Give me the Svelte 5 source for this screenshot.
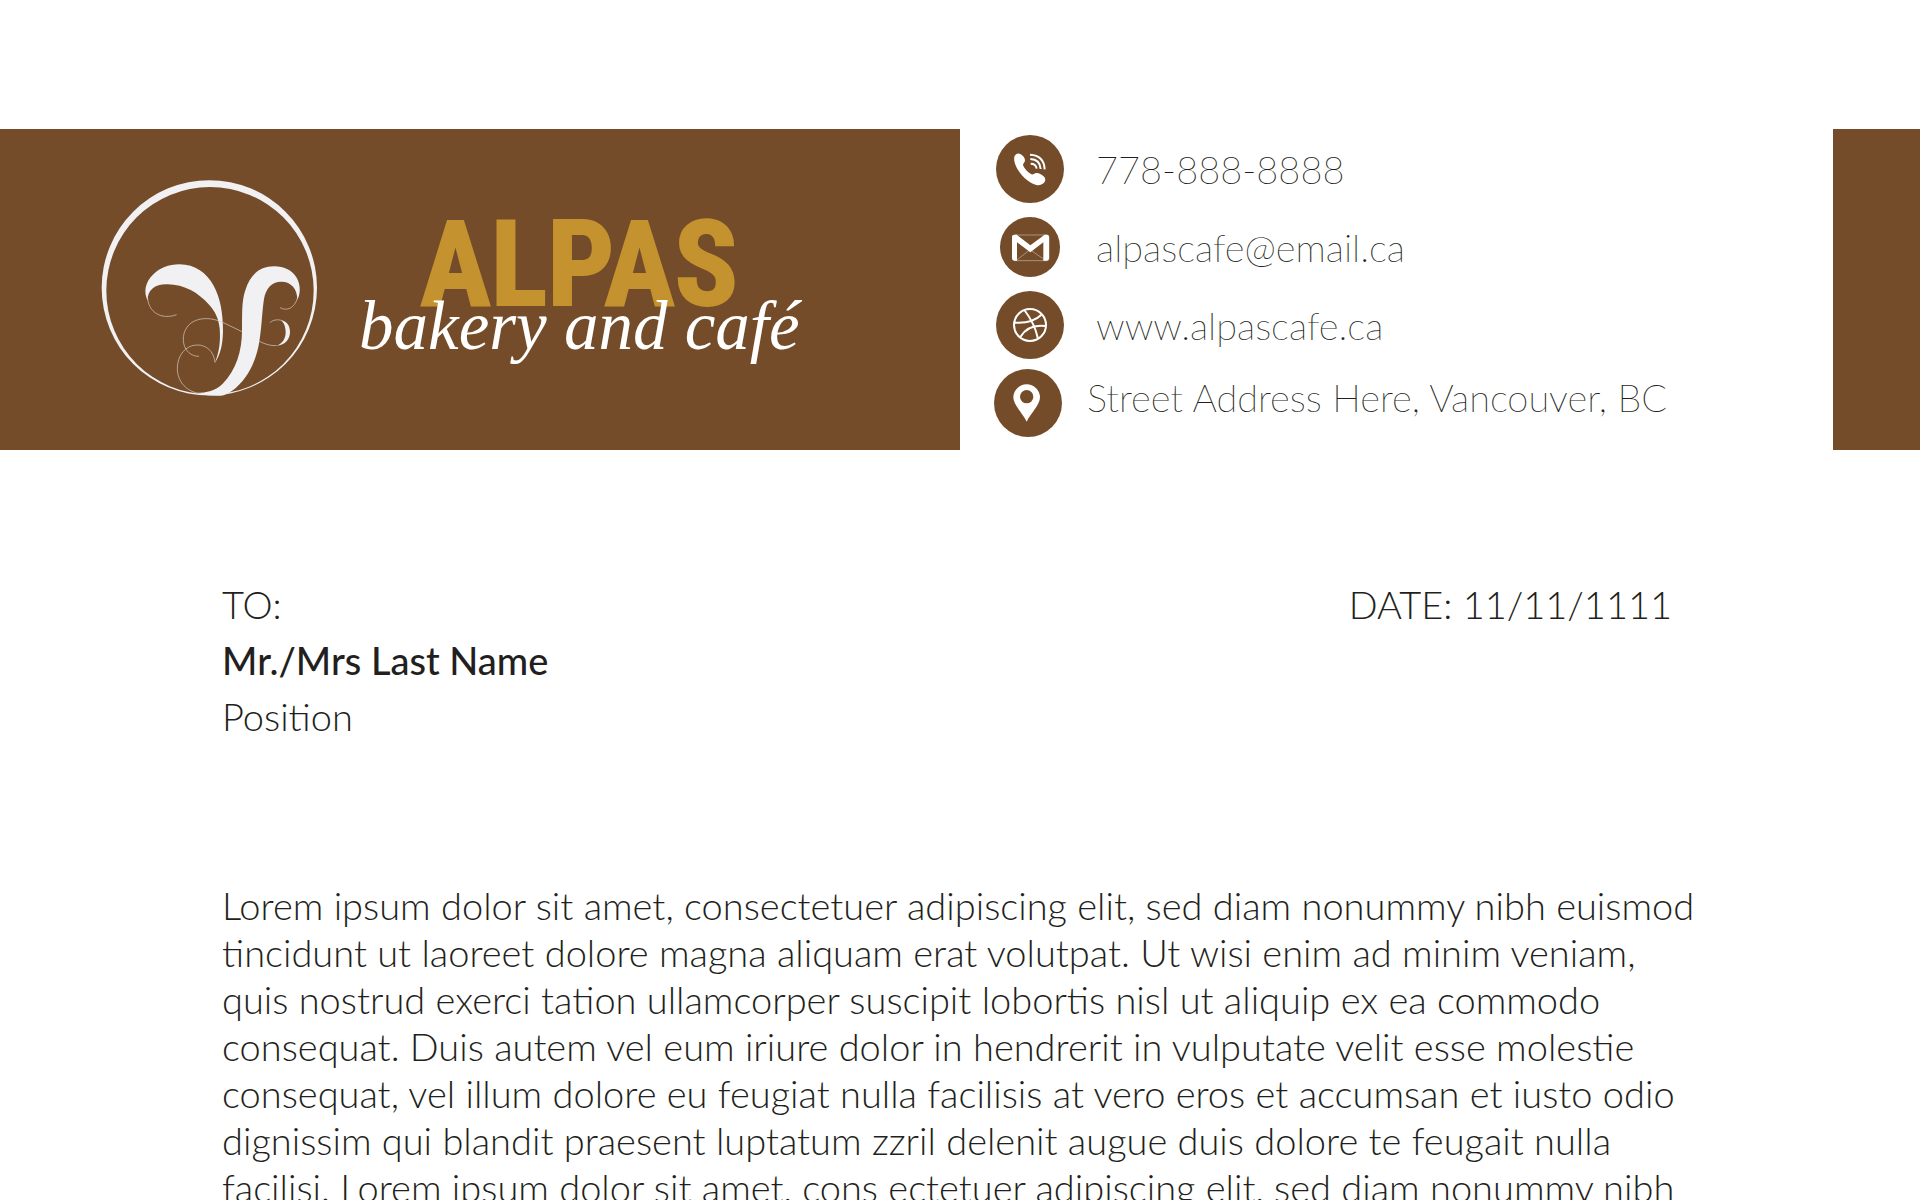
<script>
  const body =
    'Lorem ipsum dolor sit amet, consectetuer adipiscing elit, sed diam nonummy nibh euismod tincidunt ut laoreet dolore magna aliquam erat volutpat. Ut wisi enim ad minim veniam, quis nostrud exerci tation ullamcorper suscipit lobortis nisl ut aliquip ex ea commodo consequat. Duis autem vel eum iriure dolor in hendrerit in vulputate velit esse molestie consequat, vel illum dolore eu feugiat nulla facilisis at vero eros et accumsan et iusto odio dignissim qui blandit praesent luptatum zzril delenit augue duis dolore te feugait nulla facilisi. Lorem ipsum dolor sit amet, cons ectetuer adipiscing elit, sed diam nonummy nibh';
</script>

<main class="sheet">
  <header class="masthead">
    <div class="brand">
      <svg class="emblem" viewBox="0 0 720 720" role="img" aria-label="Alpas emblem">
        <path
          class="solid"
          fill-rule="evenodd"
          d="M35 368.500a323 323 0 1 0 646 0a323 323 0 1 0 -646 0zM49 377a311 311 0 1 1 622 0a311 311 0 1 1 -622 0z"
        />
        <path
          class="solid"
          d="M173 407C160 380 166 352 188 330C208 309 236 298 268 298C316 298 350 324 371 362C391 398 399 444 399 500C398 540 391 568 375 593C388 560 392 530 389 490C386 462 376 440 358 420C326 384 284 358 232 358C196 357 172 374 173 407z"
        />
        <path
          class="solid"
          d="M320 684C350 682 376 678 398 656C440 614 455 556 456 500C457 450 454 410 466 376C480 330 508 304 552 304C584 304 606 316 620 338C632 358 632 386 622 404C622 372 604 350 574 350C544 350 528 370 522 402C516 440 516 480 508 530C498 590 474 636 438 668C424 680 410 690 392 692C364 693 340 690 320 684z"
        />
        <path class="solid" d="M572 465C590 468 600 482 600 500C600 522 586 540 560 542C578 536 587 520 587 502C587 486 582 472 572 465z" />
        <g class="hair">
          <path d="M173 400C176 440 212 466 260 449" />
          <path d="M622 400C614 428 592 440 570 428" />
          <path d="M540 473C550 464 562 463 574 466" />
          <path d="M560 542C540 543 522 536 508 529" />
          <path d="M456 500L398 472C366 458 332 456 306 472C282 488 274 520 284 545C292 564 308 574 327 574" />
          <path d="M375 593C372 558 348 540 322 540C286 540 262 572 262 610C262 650 290 682 334 686" />
        </g>
      </svg>
      <div class="wordmark">
        <span class="name">ALPAS</span>
        <span class="tagline">bakery and café</span>
      </div>
    </div>

    <address class="contacts">
      <a class="contact" href="tel:7788888888">
        <span class="slot">
          <svg class="badge" viewBox="0 0 204 204" aria-hidden="true">
            <circle cx="102" cy="102" r="102" />
            <path
              class="white"
              d="M58 60C62 55 68 54 73 57C81 61 87 69 87 76C87 83 80 86 81 91C85 101 95 112 106 118C112 120 115 114 121 114C130 114 139 120 145 126C149 131 149 138 144 143C138 149 130 152 121 150C94 144 61 108 55 79C54 70 54 64 58 60z"
            />
            <g class="wave">
              <path d="M104 86Q120 86 122 101" />
              <path d="M103 72Q132 73 134 102" />
              <path d="M102 59Q144 61 146 103" />
            </g>
          </svg>
        </span>
        778-888-8888
      </a>
      <a class="contact" href="mailto:alpascafe@email.ca">
        <span class="slot">
          <svg class="badge small" viewBox="0 0 180 180" aria-hidden="true">
            <circle cx="90" cy="90" r="90" />
            <rect class="thin" x="39" y="54" width="108" height="77" rx="6" />
            <path class="thin" d="M48 131L90 98L138 131" />
            <path class="white" d="M36 60Q36 53 44 53H50L91 85L134 53H140Q147 53 147 61V124Q147 131 140 131H130V76L91 106L51 76V131H43Q36 131 36 124z" />
          </svg>
        </span>
        alpascafe@email.ca
      </a>
      <a class="contact" href="https://www.alpascafe.ca">
        <span class="slot">
          <svg class="badge" viewBox="0 0 204 204" aria-hidden="true">
            <circle cx="102" cy="102" r="102" />
            <g class="ball">
              <circle cx="102" cy="102" r="48" />
              <path d="M85 57Q116 97 126 143" />
              <path d="M56 95Q108 99 139 69" />
              <path d="M73 138Q96 98 149 105" />
            </g>
          </svg>
        </span>
        www.alpascafe.ca
      </a>
      <div class="contact street">
        <span class="slot">
          <svg class="badge" viewBox="0 0 204 204" aria-hidden="true">
            <circle cx="102" cy="102" r="102" />
            <path class="white" fill-rule="evenodd" d="M98 158C88 136 58 108 58 85A40 39 0 0 1 138 85C138 108 108 136 98 158zM78 83a20 20 0 1 0 40 0a20 20 0 1 0 -40 0z" />
          </svg>
        </span>
        <span class="line">Street Address Here, Vancouver, BC</span>
      </div>
    </address>

    <div class="edge"></div>
  </header>

  <article class="letter">
    <div class="heading">
      <div class="recipient">
        <p>TO:</p>
        <p class="person">Mr./Mrs Last Name</p>
        <p>Position</p>
      </div>
      <p class="date">DATE: 11/11/1111</p>
    </div>
    <p class="copy">{body}</p>
  </article>
</main>

<style>
  :global(body) {
    margin: 0;
    background: #fff;
  }
  .sheet {
    box-sizing: border-box;
    height: 100vh;
    overflow: hidden;
    padding-top: 129px;
    background: #fff;
    color: #231f20;
    font-family: Lato, 'Open Sans', sans-serif;
    font-size: 38px;
    font-weight: 300;
  }
  .masthead {
    display: grid;
    grid-template-columns: 50% 1fr 87px;
    min-height: 321px;
  }
  .brand {
    display: flex;
    align-items: flex-start;
    gap: 29px;
    padding: 36px 0 0 90px;
    background: #744c29;
  }
  .emblem {
    flex: none;
    width: 240px;
    height: 240px;
  }
  .solid {
    fill: #f1f0f2;
  }
  .hair {
    fill: none;
    stroke: #d9cfc8;
    stroke-width: 2;
  }
  .wordmark {
    display: flex;
    flex-direction: column;
    align-items: center;
    padding-top: 50px;
    white-space: nowrap;
  }
  .name {
    color: #c4922e;
    font-family: 'Liberation Sans Narrow', 'Roboto Condensed', Roboto, sans-serif;
    font-size: 118px;
    font-weight: 700;
    line-height: 100px;
    -webkit-text-stroke: 2px #c4922e;
  }
  .tagline {
    margin-top: -29px;
    color: #fff;
    font-family: 'Liberation Serif', serif;
    font-size: 69px;
    font-style: italic;
    font-weight: 400;
    line-height: 80px;
  }
  .contacts {
    display: flex;
    flex-direction: column;
    padding: 1px 0 0 30px;
    font-family: 'Lato Thin', Lato, 'Open Sans', sans-serif;
    font-style: normal;
    line-height: 46px;
    white-space: nowrap;
  }
  .contact {
    display: flex;
    align-items: center;
    gap: 26px;
    height: 78px;
    color: inherit;
    text-decoration: none;
  }
  .street {
    gap: 21px;
  }
  .line {
    padding-bottom: 12px;
  }
  .slot {
    display: flex;
    flex: none;
    justify-content: center;
    width: 80px;
  }
  .street .slot {
    width: 76px;
  }
  .badge {
    width: 68px;
    height: 68px;
    fill: #744c29;
  }
  .small {
    width: 60px;
    height: 60px;
  }
  .white {
    fill: #fff;
  }
  .wave,
  .ball,
  .thin {
    fill: none;
    stroke: #fff;
    stroke-width: 6;
  }
  .ball circle {
    fill: none;
  }
  .thin {
    stroke: #c7b7aa;
    stroke-width: 2;
  }
  .edge {
    background: #744c29;
  }
  .letter {
    padding: 126px 220px 0 222px;
  }
  .heading {
    display: flex;
    justify-content: space-between;
    line-height: 56px;
  }
  p {
    margin: 0;
  }
  .person {
    font-weight: 500;
  }
  .date {
    padding-right: 28px;
  }
  .copy {
    margin-top: 138px;
    line-height: 47px;
  }
</style>
